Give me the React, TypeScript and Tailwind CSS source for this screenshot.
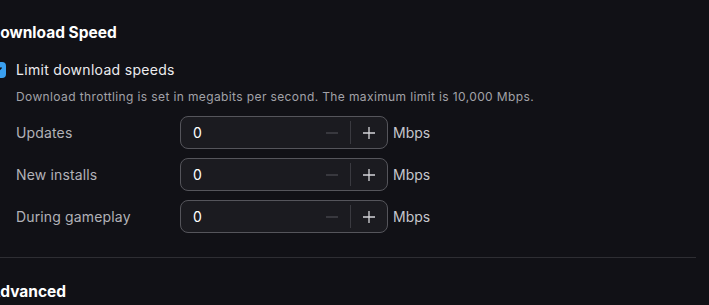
import React from "react";

const rows = ["Updates", "New installs", "During gameplay"];

const SpeedInput = () => (
  <div className="flex items-center h-[33px] w-[208px] rounded-lg border border-[#55555b] bg-[#1b1b20]">
    <span className="flex-1 pl-3 text-sm text-white">0</span>
    <button className="flex items-center justify-center w-9 h-full">
      <svg width="12" height="12" viewBox="0 0 12 12">
        <path d="M0 6h12" stroke="#4a4a50" strokeWidth="1.3" />
      </svg>
    </button>
    <div className="w-px h-[23px] bg-[#3a3a40]" />
    <button className="flex items-center justify-center w-9 h-full">
      <svg width="12" height="12" viewBox="0 0 12 12">
        <path d="M0 6h12M6 0v12" stroke="#d4d4d8" strokeWidth="1.3" />
      </svg>
    </button>
  </div>
);

const App = () => {
  return (
    <div
      className="w-[709px] h-[305px] overflow-hidden bg-[#111116]"
      style={{ fontFamily: "Inter, 'Noto Sans', sans-serif" }}
    >
      <div className="-ml-[10px] mr-[13px] pt-5">
        <h2 className="-ml-px text-[15.5px] leading-[25px] font-bold text-white">Download Speed</h2>

        <label className="mt-[15px] flex items-center gap-[10px] h-5">
          <span className="flex items-center justify-center w-4 h-4 rounded-[4px] bg-[#3aa0f0]">
            <svg width="10" height="10" viewBox="0 0 10 10">
              <path d="M1.5 5.2l2.3 2.3L8.5 2.5" stroke="#0d0d12" strokeWidth="1.6" fill="none" />
            </svg>
          </span>
          <span className="text-sm tracking-[0.3px] text-[#ececef]">Limit download speeds</span>
        </label>

        <div className="pl-[26px]">
          <p className="mt-[9px] text-xs leading-4 tracking-[0.38px] text-[#a2a2a8]">
            Download throttling is set in megabits per second. The maximum limit is 10,000 Mbps.
          </p>

          <div className="mt-[11px] flex flex-col gap-[9px]">
            {rows.map((r) => (
              <div key={r} className="flex items-center">
                <span className="w-[164px] text-sm tracking-[0.15px] text-[#b2b2b8]">{r}</span>
                <SpeedInput />
                <span className="ml-[5px] text-sm text-[#c6c6cc]">Mbps</span>
              </div>
            ))}
          </div>
        </div>

        <div className="mt-6 h-px bg-[#2e2e33]" />

        <h2 className="-ml-px mt-[21px] text-[15.5px] leading-[25px] font-bold text-white">Advanced</h2>
      </div>
    </div>
  );
};

export default App;
